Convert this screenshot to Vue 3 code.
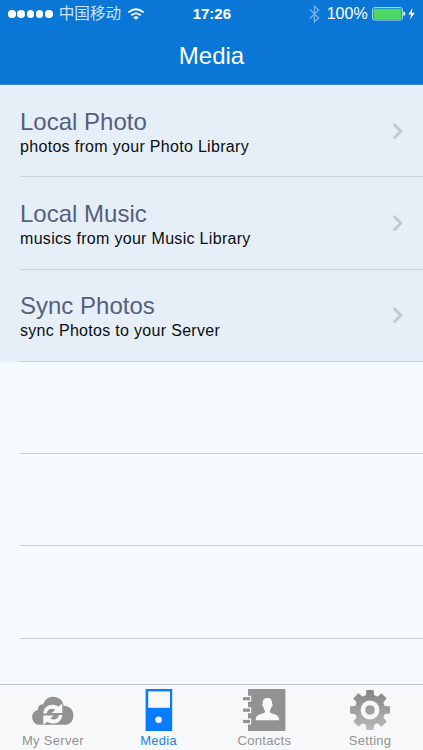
<template>
  <div class="screen">
    <header>
      <div class="status-bar">
        <div class="signal">
          <span v-for="n in 5" :key="n" class="dot"></span>
        </div>
        <span class="carrier">中国移动</span>
        <svg class="wifi" width="18" height="13" viewBox="0 0 18 13">
          <path d="M1.4 4.4 Q9 -2 16.6 4.4 M4.2 7.3 Q9 3.4 13.8 7.3" fill="none" stroke="#fff" stroke-width="1.8" />
          <path d="M6.3 9.2 Q9 7.2 11.7 9.2 L9 12 Z" fill="#fff" />
        </svg>
        <span class="time">17:26</span>
        <svg class="bluetooth" width="11" height="18" viewBox="0 0 11 18">
          <path d="M.8 4.6 L9.7 13 L5.4 16.7 V1.3 L9.7 5 L.8 13.4" fill="none" stroke="#70b1ec" stroke-width="1.4" />
        </svg>
        <span class="percent">100%</span>
        <svg class="battery" width="44" height="14" viewBox="0 0 44 14">
          <rect x=".6" y=".6" width="29.8" height="12.4" rx="2" fill="none" stroke="#b5dcf4" />
          <rect x="1.7" y="1.7" width="27.6" height="10.2" rx="1" fill="#4cd964" />
          <path d="M31.3 4.5 Q33.4 4.8 33.4 6.8 Q33.4 8.8 31.3 9.1 Z" fill="#e8f6ff" />
          <path d="M40.6 .8 L36.4 7.4 H39.2 L37.8 12.8 L42.9 5.8 H39.8 Z" fill="#fff" />
        </svg>
      </div>
      <h1>Media</h1>
    </header>

    <main>
      <div v-for="item in items" :key="item.title" class="row filled">
        <div class="row-body">
          <div class="row-text">
            <div class="row-title">{{ item.title }}</div>
            <div class="row-detail">{{ item.detail }}</div>
          </div>
          <svg class="chevron" width="12" height="18" viewBox="0 0 12 18">
            <path d="M1.7 2 L8.9 9.2 L1.7 16.4" fill="none" stroke="#c5c7ce" stroke-width="2.8" />
          </svg>
        </div>
      </div>
      <div v-for="n in 4" :key="n" class="row">
        <div class="row-body"></div>
      </div>
    </main>

    <nav>
      <a class="tab">
        <svg width="44" height="44" viewBox="0 0 44 44">
          <path d="M6.8 36.7 C3.4 35.7 1.2 32.6 1.2 29 C1.2 25.3 3.5 22.8 6.8 22 C6.8 18.3 9.3 16.2 12.2 16.6 C13.6 11.5 17.5 8.7 22 8.7 C27.8 8.7 32 12.5 32.6 17.7 C38.6 18 42.4 21.6 42.4 27.2 C42.4 32.2 39.8 35.8 35.5 36.7 Z" fill="#929292" />
          <path d="M12.3 25.4 C12.8 18.2 20.6 14.4 27.4 18.6 L31.3 15.6 V25 H20.8 L24.3 21.8 C20.6 19.5 16.2 21.4 15.8 25.4 Z" fill="#f7f8fa" />
          <path d="M31.3 27 C31 34.3 23.1 37.9 16.3 33.7 L12.3 36.7 V27.4 H22.8 L19.3 30.6 C23 32.7 27.4 31 27.8 27 Z" fill="#f7f8fa" />
        </svg>
        <span>My Server</span>
      </a>
      <a class="tab active">
        <svg width="44" height="44" viewBox="0 0 44 44">
          <path d="M8.6 1 H35.2 V43 H8.6 Z" fill="#087bff" />
          <path d="M11.2 3.4 H33 V19.8 H11.2 Z" fill="#f7f8fa" />
          <circle cx="21.6" cy="31.7" r="3.3" fill="#f7f8fa" />
        </svg>
        <span>Media</span>
      </a>
      <a class="tab">
        <svg width="44" height="44" viewBox="0 0 44 44">
          <path d="M6 1 H43.4 V43 H6 Z" fill="#929292" />
          <g v-for="y in [10.7, 22.2, 33.5]" :key="y">
            <rect x="4" :y="y - 3" width="5.2" height="6" fill="#f7f8fa" />
            <rect x="1" :y="y - 1.6" width="7" height="3.2" fill="#929292" />
          </g>
          <path d="M25.4 10 C28.8 10 30.4 12.2 30 15.5 C31.2 16 30.6 18.4 29.4 19 C29 21 27.8 22 27.8 23.8 C28.4 26.6 36.6 25.4 37 30.6 V32.2 H13.8 V30.6 C14.2 25.4 22.4 26.6 23 23.8 C23 22 21.8 21 21.4 19 C20.2 18.4 19.6 16 20.8 15.5 C20.4 12.2 22 10 25.4 10 Z" fill="#f7f8fa" />
        </svg>
        <span>Contacts</span>
      </a>
      <a class="tab">
        <svg width="44" height="44" viewBox="0 0 44 44">
          <defs>
            <linearGradient id="gear" gradientUnits="userSpaceOnUse" x1="0" y1="2" x2="0" y2="42">
              <stop offset="0" stop-color="#858585" />
              <stop offset="1" stop-color="#bababa" />
            </linearGradient>
            <mask id="teeth">
              <circle cx="22" cy="22" r="15.2" fill="#fff" />
              <path v-for="a in 8" :key="a" d="M18.4 2 H25.6 L26.4 10 H17.6 Z" fill="#fff" :transform="`rotate(${a * 45} 22 22)`" />
              <circle cx="22" cy="22" r="9.4" fill="#000" />
              <circle cx="22" cy="22" r="4.8" fill="#fff" />
            </mask>
          </defs>
          <rect width="44" height="44" fill="url(#gear)" mask="url(#teeth)" />
        </svg>
        <span>Setting</span>
      </a>
    </nav>
  </div>
</template>

<script setup>
const items = [
  { title: 'Local Photo', detail: 'photos from your Photo Library' },
  { title: 'Local Music', detail: 'musics from your Music Library' },
  { title: 'Sync Photos', detail: 'sync Photos to your Server' }
];
</script>

<style>
body { margin: 0; }
</style>

<style scoped>
.screen {
  width: 423px;
  height: 750px;
  display: flex;
  flex-direction: column;
  overflow: hidden;
  background: #f5faff;
  font-family: "Liberation Sans", "Noto Sans CJK SC", sans-serif;
}
header {
  height: 84px;
  flex: none;
  background: #0a76d6;
  border-bottom: 1px solid #3d83c8;
  color: #fff;
}
.status-bar { display: flex; align-items: center; height: 28px; padding-left: 8px; }
.signal { display: flex; gap: 1.8px; }
.dot { width: 7.5px; height: 7.5px; border-radius: 50%; background: #fff; }
.carrier { margin-left: 6px; width: 63px; font-size: 15.6px; line-height: 28px; white-space: nowrap; color: #c9e3fa; }
.wifi { margin-left: 5.5px; }
.time { width: 39px; margin-left: 47.5px; padding-bottom: 2px; font-size: 15px; font-weight: bold; white-space: nowrap; }
.bluetooth { margin-left: 77px; }
.percent { width: 41px; margin-left: 7px; font-size: 16px; }
.battery { margin-left: 4px; }
h1 {
  margin: 0;
  height: 56px;
  line-height: 55px;
  font-size: 24px;
  font-weight: normal;
  text-align: center;
}
main { flex: 1; overflow: hidden; }
.row { height: 92.3px; padding-left: 20px; }
.filled { background: #e6eff7; }
.row-body {
  box-sizing: border-box;
  height: 100%;
  display: flex;
  align-items: center;
  justify-content: space-between;
  border-bottom: 1px solid #cbd0d7;
}
.row-text { padding-top: 3px; }
.row-title { font-size: 24px; line-height: 28px; color: #56607b; }
.row-detail { font-size: 16px; line-height: 21px; letter-spacing: 0.31px; color: #0b0d10; }
.chevron { margin-right: 19px; }
nav {
  box-sizing: border-box;
  height: 66px;
  flex: none;
  display: flex;
  padding: 3px 0 0;
  border-top: 1px solid #bcc4cc;
  background: #f7f8fa;
}
.tab {
  flex: 1;
  display: flex;
  flex-direction: column;
  align-items: center;
  font-size: 13px;
  letter-spacing: 0.3px;
  line-height: 18px;
  color: #929292;
}
.active { color: #1b80ee; }
</style>
